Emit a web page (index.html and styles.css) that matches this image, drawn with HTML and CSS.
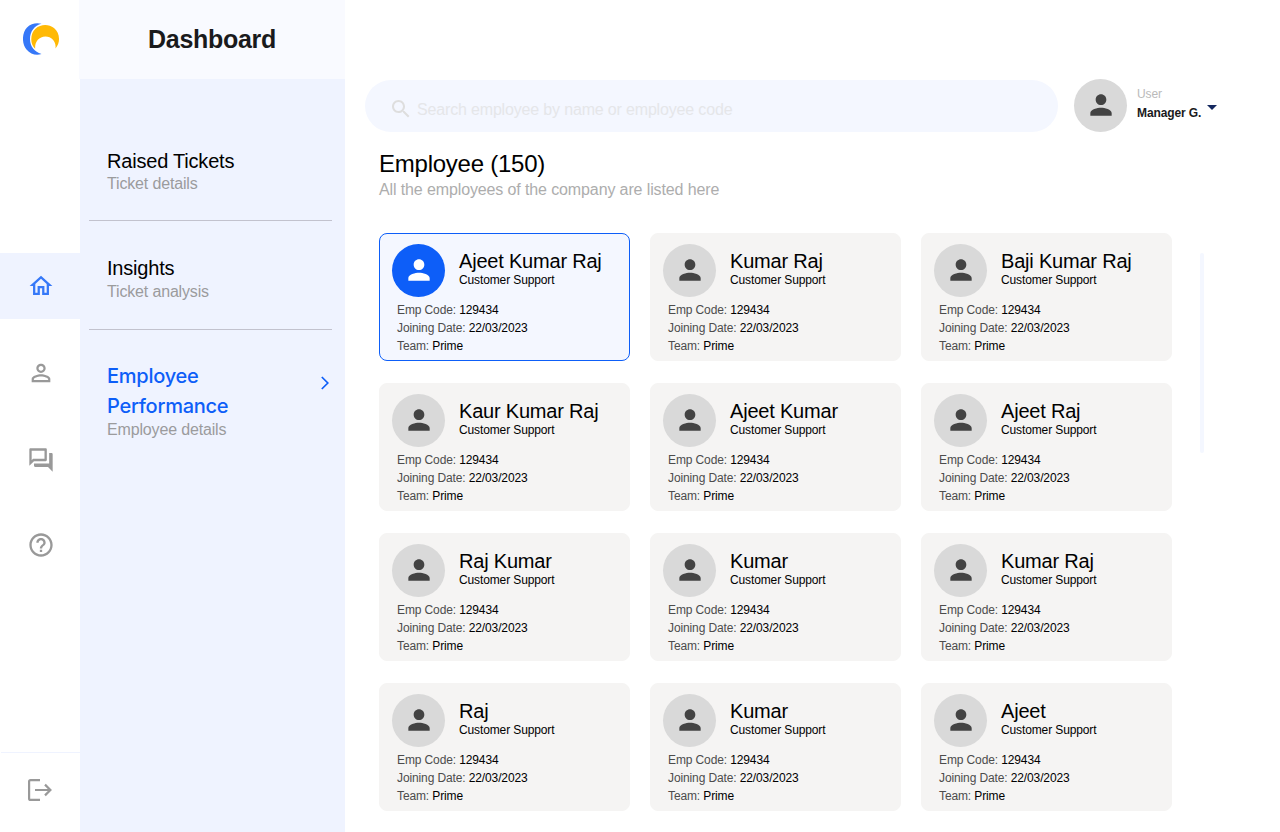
FILE: index.html
```html
<!DOCTYPE html>
<html lang="en">
<head>
<meta charset="utf-8">
<title>Dashboard</title>
<link rel="stylesheet" href="styles.css">
</head>
<body>
<svg class="defs" width="0" height="0">
  <symbol id="person" viewBox="0 0 24 24"><path d="M12 12c2.210 0 4-1.790 4-4s-1.790-4-4-4-4 1.790-4 4 1.790 4 4 4zm0 2c-2.670 0-8 1.340-8 4v2h16v-2c0-2.660-5.330-4-8-4z"/></symbol>
</svg>
<div class="app">
  <nav class="rail">
    <svg class="logo" width="37" height="32" viewBox="0 0 37 32">
      <path fill="#3678f8" d="M18.500 .8C14 -.4 8 .2 4 4.600C-1.300 10-1.300 21 3.500 26.500C7.500 31.500 13.500 32.600 18.500 31C11.500 29 7 23.500 7 16C7 8.500 11.500 2.600 18.500 .8Z"/>
      <path fill="#ffb905" d="M12.200 25.800C6.500 20.500 7.300 10.500 12.500 5.800C17.500 1.200 25.500 .8 31 5C36.800 9.800 38 19 32.400 25.500C33.600 19.500 29 13.500 22.500 13.500C15.500 13.500 11.500 19.500 12.200 25.800Z"/>
    </svg>
    <div class="rail-items">
      <a class="rail-item active"><svg width="28" height="28" viewBox="-.3 -.3 24.600 24.600"><path d="M12 5.690l5 4.500V18h-2v-6H9v6H7v-7.810l5-4.500M12 3L2 12h3v8h6v-6h2v6h6v-8h3L12 3z"/></svg></a>
      <a class="rail-item"><svg width="28" height="28" viewBox="0 0 24 24"><path d="M12 5.900c1.160 0 2.100.94 2.100 2.100s-.94 2.100-2.100 2.100S9.900 9.160 9.900 8s.94-2.100 2.100-2.100m0 9c2.970 0 6.100 1.460 6.100 2.100v1.100H5.900V17c0-.64 3.130-2.100 6.100-2.100M12 4C9.790 4 8 5.790 8 8s1.790 4 4 4 4-1.790 4-4-1.790-4-4-4zm0 9c-2.670 0-8 1.340-8 4v3h16v-3c0-2.660-5.330-4-8-4z"/></svg></a>
      <a class="rail-item"><svg width="28" height="28" viewBox="0 0 24 24"><path d="M15 4v7H5.170L4 12.170V4h11m1-2H3c-.55 0-1 .45-1 1v14l4-4h10c.55 0 1-.45 1-1V3c0-.55-.45-1-1-1zm5 4h-2v9H6v2c0 .55.45 1 1 1h11l4 4V7c0-.55-.45-1-1-1z"/></svg></a>
      <a class="rail-item"><svg width="28" height="28" viewBox="0 0 24 24"><path d="M11 18h2v-2h-2v2zm1-16C6.480 2 2 6.480 2 12s4.480 10 10 10 10-4.480 10-10S17.520 2 12 2zm0 18c-4.410 0-8-3.590-8-8s3.590-8 8-8 8 3.590 8 8-3.590 8-8 8zm0-14c-2.210 0-4 1.790-4 4h2c0-1.100.9-2 2-2s2 .9 2 2c0 2-3 1.750-3 5h2c0-2.250 3-2.500 3-5 0-2.210-1.790-4-4-4z"/></svg></a>
    </div>
    <a class="logout"><svg class="line" width="24" height="22" viewBox="0 0 24 22" stroke="#999" stroke-width="2.200"><path d="M12 1.100H2.600Q1.100 1.100 1.100 2.600V19.400Q1.100 20.900 2.600 20.900H12M7 11H22.500M17 5.600L22.400 11L17 16.400"/></svg></a>
  </nav>

  <aside class="panel">
    <h1 class="panel-title">Dashboard</h1>
    <div class="menu">
      <a class="menu-item"><div class="menu-name">Raised Tickets</div><div class="menu-sub">Ticket details</div></a>
      <a class="menu-item"><div class="menu-name">Insights</div><div class="menu-sub">Ticket analysis</div></a>
      <a class="menu-item current">
        <div><div class="menu-name">Employee<br>Performance</div><div class="menu-sub">Employee details</div></div>
        <svg class="line chevron" width="8" height="14" viewBox="0 0 8 14" stroke="#0d5ef8" stroke-width="1.700"><path d="M.8 1L6.800 7L.8 13"/></svg>
      </a>
    </div>
  </aside>

  <main class="main">
    <header class="topbar">
      <div class="search">
        <svg width="24" height="24" viewBox="0 0 24 24"><path d="M15.500 14h-.79l-.28-.27C15.410 12.590 16 11.110 16 9.500 16 5.910 13.090 3 9.500 3S3 5.910 3 9.500 5.910 16 9.500 16c1.610 0 3.090-.59 4.230-1.570l.27.28v.79l5 4.990L20.490 19l-4.990-5zm-6 0C7.010 14 5 11.990 5 9.500S7.010 5 9.500 5 14 7.010 14 9.500 11.990 14 9.500 14z"/></svg>
        <span>Search employee by name or employee code</span>
      </div>
      <div class="user">
        <div class="avatar"><svg width="32" height="32"><use href="#person"/></svg></div>
        <div class="user-text"><div class="user-label">User</div><div class="user-name">Manager G.</div></div>
        <div class="caret"></div>
      </div>
    </header>
    <h2 class="title">Employee (150)</h2>
    <p class="subtitle">All the employees of the company are listed here</p>
    <div class="list">
      <div class="grid" id="grid"></div>
      <div class="scrollbar"></div>
    </div>
  </main>
</div>
<script src="app.js"></script>
</body>
</html>
```

FILE: app.js
```js
const names = [
  "Ajeet Kumar Raj", "Kumar Raj", "Baji Kumar Raj",
  "Kaur Kumar Raj", "Ajeet Kumar", "Ajeet Raj",
  "Raj Kumar", "Kumar", "Kumar Raj",
  "Raj", "Kumar", "Ajeet"
];
document.getElementById("grid").innerHTML = names.map((name, i) => `
  <article class="card${i === 0 ? " selected" : ""}">
    <div class="card-head">
      <div class="avatar"><svg width="32" height="32"><use href="#person"/></svg></div>
      <div class="who"><div class="name">${name}</div><div class="role">Customer Support</div></div>
    </div>
    <div class="details">
      <div>Emp Code: <b>129434</b></div>
      <div>Joining Date: <b>22/03/2023</b></div>
      <div>Team: <b>Prime</b></div>
    </div>
  </article>`).join("");
```

FILE: styles.css
```css
* { box-sizing: border-box; margin: 0; padding: 0; letter-spacing: -0.01em; }
body { font-family: "Liberation Sans", Arial, sans-serif; background: #fff; color: #000; }
svg { display: block; fill: currentColor; flex: none; }
svg.line { fill: none; }
.defs { position: absolute; }
.app { display: flex; height: 832px; overflow: hidden; }

.rail { width: 80px; display: flex; flex-direction: column; flex: none; }
.logo { margin: 23px 0 0 23px; }
.rail-items { margin-top: 198px; display: flex; flex-direction: column; gap: 20px; }
.rail-item { height: 66px; display: flex; align-items: center; justify-content: center; padding: 2px 0 0 2px; color: #999; }
.rail-item.active { background: #eff3ff; color: #3678f8; padding-top: 0; }
.rail-item:nth-child(3) { padding-top: 4px; }
.logout { margin: auto 0 0 1px; height: 80px; border-top: 1px solid #eff3ff; padding: 26px 0 0 27px; }

.panel { width: 265px; background: #eff3ff; flex: none; }
.panel-title { height: 79px; margin-left: -1px; background: #f9faff; text-align: center; font-size: 25px; line-height: 79px; color: #1a1a1c; letter-spacing: -0.3px; }
.menu { padding: 70px 13px 0 9px; }
.menu-item { display: block; padding-left: 18px; }
.menu-item + .menu-item { margin-top: 26px; padding-top: 35px; border-top: 1px solid #c2c2ce; }
.menu-item + .current { display: flex; justify-content: space-between; margin-top: 27px; padding-top: 31px; padding-right: 3px; }
.menu-name { font-size: 20px; line-height: 24px; }
.menu-sub { font-size: 16px; line-height: 20px; padding-top: 1px; color: #9b9b9d; }
.menu-item:nth-child(2) .menu-sub { padding-top: 2px; }
.current .menu-name { font-family: Inter, sans-serif; font-weight: 500; line-height: 30px; color: #0d5ef8; letter-spacing: -0.25px; }
.current .menu-sub { padding-top: 0; margin-top: -1px; }
.chevron { margin-top: 15px; }

.main { flex: 1; padding: 79px 0 0 20px; }
.topbar { display: flex; }
.search { width: 693px; height: 52px; margin-top: 1px; border-radius: 26px; background: #f4f7ff; display: flex; padding: 17px 0 0 24px; gap: 4px; color: #dedede; }
.search span { font-size: 16px; line-height: 20px; padding-top: 3px; color: #e5e6e9; letter-spacing: -0.165px; }
.avatar { width: 53px; height: 53px; border-radius: 50%; background: #d9d9d9; color: #434343; display: flex; align-items: center; justify-content: center; flex: none; padding: 0 0 1px 1px; }
.user { margin-left: 16px; display: flex; }
.user-text { margin: 6px 0 0 10px; width: 64px; font-size: 12px; line-height: 19px; }
.user-label { color: #bababa; }
.user-name { font-weight: bold; color: #1a1a1c; white-space: nowrap; }
.caret { margin: 26px 0 0 6px; width: 10px; height: 5px; background: #14285f; clip-path: polygon(0 0, 100% 0, 50% 100%); }

.title { margin: 18px 0 0 14px; font-size: 24px; line-height: 28px; font-weight: normal; }
.subtitle { margin: 2px 0 0 14px; font-size: 16px; line-height: 20px; color: #adadad; letter-spacing: -0.12px; }

.list { display: flex; margin: 33px 0 0 14px; gap: 28px; }
.grid { display: grid; grid-template-columns: repeat(3, 251px); gap: 22px 20px; }
.scrollbar { width: 4px; height: 200px; margin-top: 20px; border-radius: 2px; background: #f4f7ff; }
.card { height: 128px; border: 1px solid #f5f4f3; border-radius: 8px; background: #f5f4f3; padding: 10px 12px; }
.selected { background: #f4f7ff; border-color: #0d5ef8; }
.selected .avatar { background: #0d5ef8; color: #fff; }
.card-head { display: flex; gap: 14px; }
.who { padding-top: 5px; white-space: nowrap; }
.name { font-size: 20px; line-height: 24px; }
.role { font-size: 12px; line-height: 14px; }
.details { margin: 4px 0 0 5px; font-size: 12px; line-height: 18px; color: #4c4c4c; }
.details b { font-weight: normal; color: #000; }
```
